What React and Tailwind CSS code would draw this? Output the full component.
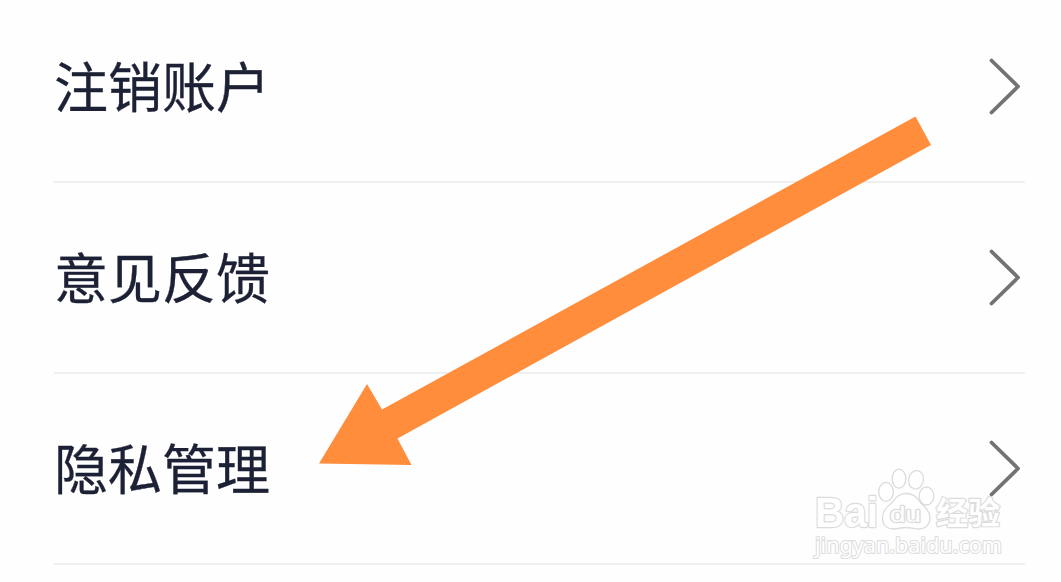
const settings = ["注销账户", "意见反馈", "隐私管理"];

function ChevronIcon() {
  return (
    <svg
      className="h-[58px] w-8 shrink-0"
      viewBox="0 0 32 58"
      fill="none"
      stroke="#737373"
      strokeWidth="3.8"
      strokeLinecap="round"
      strokeLinejoin="round"
    >
      <path d="M3.5 2.5 L30 28.5 L3.5 54.5" />
    </svg>
  );
}

function SettingRow({ label }) {
  return (
    <li className="flex h-[191px] items-center justify-between border-b-2 border-[#efefef] pr-[5px]">
      <span className="pb-[3px] text-[54px] leading-none text-[#1d2136] [-webkit-text-stroke:0.3px_#1d2136]">
        {label}
      </span>
      <ChevronIcon />
    </li>
  );
}

function PointerArrow() {
  return (
    <svg
      className="pointer-events-none absolute top-[110px] left-[310px] h-[360px] w-[630px]"
      viewBox="310 110 630 360"
    >
      <path
        d="M319 463.5 L367 384 L382 409.5 L915.5 116.5 L931 145 L397.5 438.5 L411.5 465 Z"
        fill="#ff8d3b"
      />
    </svg>
  );
}

function Watermark() {
  return (
    <svg
      className="pointer-events-none absolute top-[460px] left-[804px] h-[104px] w-[208px]"
      viewBox="804 460 208 104"
      fill="#fff"
      stroke="#dcdcdc"
      strokeWidth="1.3"
      strokeLinejoin="round"
    >
      {/* paw */}
      <ellipse cx="886" cy="491.8" rx="7.3" ry="9.5" />
      <ellipse cx="899" cy="478.7" rx="6.8" ry="9.5" />
      <ellipse cx="916" cy="479.8" rx="7.4" ry="9.3" transform="rotate(10 916 479.8)" />
      <ellipse cx="926.5" cy="496" rx="7.3" ry="9" />
      <path d="M906 493.5 C898 493.5 895 499 891.5 503 C886 508 882.5 511 882.5 518 C882.5 525 887 529 893 529 C898 529 901 527.5 906 527.5 C911 527.5 915 529 919 529 C926 529 930 524 930 517.5 C930 510 924 507 920 502 C917 497 913 493.5 906 493.5 Z" />
      <g paintOrder="stroke" strokeWidth="2.4">
        <text
          x="815"
          y="526.5"
          textLength="63"
          lengthAdjust="spacingAndGlyphs"
          className="font-['Liberation_Sans'] text-[42px] font-bold"
        >
          Bai
        </text>
        <text
          x="890"
          y="522"
          textLength="31"
          lengthAdjust="spacingAndGlyphs"
          className="font-['Liberation_Sans'] text-[22px]"
        >
          du
        </text>
        <text
          x="936"
          y="524"
          textLength="64"
          lengthAdjust="spacingAndGlyphs"
          className="font-['Noto_Sans_CJK_SC',sans-serif] text-[31px] font-bold"
        >
          经验
        </text>
        <text
          x="815"
          y="552.5"
          textLength="187"
          lengthAdjust="spacingAndGlyphs"
          strokeWidth="2"
          className="font-['Noto_Sans',sans-serif] text-[21px]"
        >
          jingyan.baidu.com
        </text>
      </g>
    </svg>
  );
}

export default function App() {
  return (
    <main className="relative h-[582px] overflow-hidden bg-[#fefefe] font-['Noto_Sans_CJK_SC',sans-serif]">
      <ul className="-mt-2 pr-9 pl-[54px]">
        {settings.map((label) => (
          <SettingRow key={label} label={label} />
        ))}
      </ul>
      <PointerArrow />
      <Watermark />
    </main>
  );
}
